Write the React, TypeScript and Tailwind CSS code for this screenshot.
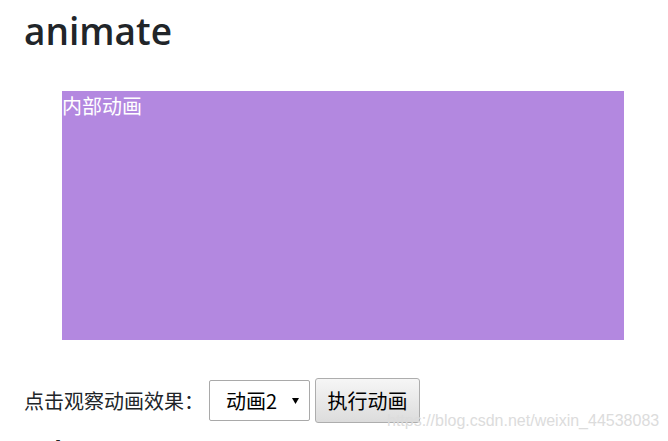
export default function App() {
  return (
    <div className="relative w-[668px] h-[441px] overflow-hidden bg-white">
      <div className="pl-6 pt-[7px] font-['Open_Sans','Noto_Sans_CJK_SC',sans-serif] text-[#212529]">
        <h1 className="text-[37px] leading-[47px] font-semibold">animate</h1>
        <div className="ml-[38px] mt-[37px] w-[562px] h-[249px] bg-[#b388e0] text-white text-[20px] leading-[30px] font-['Noto_Sans_CJK_SC',sans-serif]">
          内部动画
        </div>
        <div className="mt-[38px] flex items-center gap-[5px] h-[45px] font-['Noto_Sans_CJK_SC',sans-serif] text-[20px] leading-[30px]">
          <span className="text-[#212529]">点击观察动画效果：</span>
          <div className="w-[101px] h-[41px] border border-[#a9a9a9] rounded-[2px] bg-white flex items-center justify-between pl-4 pr-[10px] text-black">
            <span>动画2</span>
            <svg width="7" height="6" viewBox="0 0 7 6" className="mt-px">
              <polygon points="0,0 7,0 3.5,6" fill="#000" />
            </svg>
          </div>
          <button className="w-[105px] h-[45px] border border-[#adadad] rounded-[3px] bg-gradient-to-b from-[#f6f6f6] to-[#dcdcdc] text-black text-[20px] leading-[30px] flex items-center justify-center">
            执行动画
          </button>
        </div>
        <h2 className="mt-[12px] pl-[8px] text-[24px] leading-[28.8px] font-bold">ad</h2>
      </div>
      <div className="absolute left-[387px] top-[413px] text-[16px] leading-[16px] font-['Liberation_Sans',Arial,sans-serif] text-[#dcdcdc] whitespace-nowrap">
        https://blog.csdn.net/weixin_44538083
      </div>
    </div>
  );
}
